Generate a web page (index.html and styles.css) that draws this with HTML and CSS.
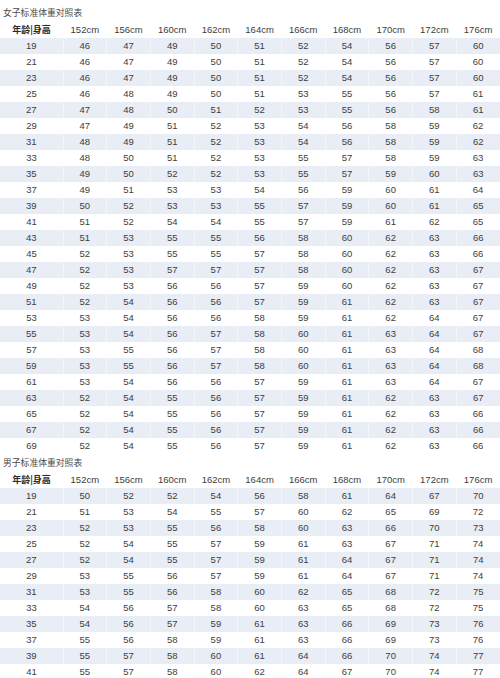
FILE: index.html
```html
<!DOCTYPE html>
<html lang="zh">
<head>
<meta charset="utf-8">
<title>标准体重对照表</title>
<link rel="stylesheet" href="styles.css">
</head>
<body>
<div class="section">
<div class="title">女子标准体重对照表</div>
<table class="chart">
<colgroup><col class="c-age"><col><col><col><col><col><col><col><col><col><col></colgroup>
<thead><tr><th class="age-h">年龄|身高</th><th>152cm</th><th>156cm</th><th>160cm</th><th>162cm</th><th>164cm</th><th>166cm</th><th>168cm</th><th>170cm</th><th>172cm</th><th>176cm</th></tr></thead>
<tbody>
<tr><td>19</td><td>46</td><td>47</td><td>49</td><td>50</td><td>51</td><td>52</td><td>54</td><td>56</td><td>57</td><td>60</td></tr>
<tr><td>21</td><td>46</td><td>47</td><td>49</td><td>50</td><td>51</td><td>52</td><td>54</td><td>56</td><td>57</td><td>60</td></tr>
<tr><td>23</td><td>46</td><td>47</td><td>49</td><td>50</td><td>51</td><td>52</td><td>54</td><td>56</td><td>57</td><td>60</td></tr>
<tr><td>25</td><td>46</td><td>48</td><td>49</td><td>50</td><td>51</td><td>53</td><td>55</td><td>56</td><td>57</td><td>61</td></tr>
<tr><td>27</td><td>47</td><td>48</td><td>50</td><td>51</td><td>52</td><td>53</td><td>55</td><td>56</td><td>58</td><td>61</td></tr>
<tr><td>29</td><td>47</td><td>49</td><td>51</td><td>52</td><td>53</td><td>54</td><td>56</td><td>58</td><td>59</td><td>62</td></tr>
<tr><td>31</td><td>48</td><td>49</td><td>51</td><td>52</td><td>53</td><td>54</td><td>56</td><td>58</td><td>59</td><td>62</td></tr>
<tr><td>33</td><td>48</td><td>50</td><td>51</td><td>52</td><td>53</td><td>55</td><td>57</td><td>58</td><td>59</td><td>63</td></tr>
<tr><td>35</td><td>49</td><td>50</td><td>52</td><td>52</td><td>53</td><td>55</td><td>57</td><td>59</td><td>60</td><td>63</td></tr>
<tr><td>37</td><td>49</td><td>51</td><td>53</td><td>53</td><td>54</td><td>56</td><td>59</td><td>60</td><td>61</td><td>64</td></tr>
<tr><td>39</td><td>50</td><td>52</td><td>53</td><td>53</td><td>55</td><td>57</td><td>59</td><td>60</td><td>61</td><td>65</td></tr>
<tr><td>41</td><td>51</td><td>52</td><td>54</td><td>54</td><td>55</td><td>57</td><td>59</td><td>61</td><td>62</td><td>65</td></tr>
<tr><td>43</td><td>51</td><td>53</td><td>55</td><td>55</td><td>56</td><td>58</td><td>60</td><td>62</td><td>63</td><td>66</td></tr>
<tr><td>45</td><td>52</td><td>53</td><td>55</td><td>55</td><td>57</td><td>58</td><td>60</td><td>62</td><td>63</td><td>66</td></tr>
<tr><td>47</td><td>52</td><td>53</td><td>57</td><td>57</td><td>57</td><td>58</td><td>60</td><td>62</td><td>63</td><td>67</td></tr>
<tr><td>49</td><td>52</td><td>53</td><td>56</td><td>56</td><td>57</td><td>59</td><td>60</td><td>62</td><td>63</td><td>67</td></tr>
<tr><td>51</td><td>52</td><td>54</td><td>56</td><td>56</td><td>57</td><td>59</td><td>61</td><td>62</td><td>63</td><td>67</td></tr>
<tr><td>53</td><td>53</td><td>54</td><td>56</td><td>56</td><td>58</td><td>59</td><td>61</td><td>62</td><td>64</td><td>67</td></tr>
<tr><td>55</td><td>53</td><td>54</td><td>56</td><td>57</td><td>58</td><td>60</td><td>61</td><td>63</td><td>64</td><td>67</td></tr>
<tr><td>57</td><td>53</td><td>55</td><td>56</td><td>57</td><td>58</td><td>60</td><td>61</td><td>63</td><td>64</td><td>68</td></tr>
<tr><td>59</td><td>53</td><td>55</td><td>56</td><td>57</td><td>58</td><td>60</td><td>61</td><td>63</td><td>64</td><td>68</td></tr>
<tr><td>61</td><td>53</td><td>54</td><td>56</td><td>56</td><td>57</td><td>59</td><td>61</td><td>63</td><td>64</td><td>67</td></tr>
<tr><td>63</td><td>52</td><td>54</td><td>55</td><td>56</td><td>57</td><td>59</td><td>61</td><td>62</td><td>63</td><td>67</td></tr>
<tr><td>65</td><td>52</td><td>54</td><td>55</td><td>56</td><td>57</td><td>59</td><td>61</td><td>62</td><td>63</td><td>66</td></tr>
<tr><td>67</td><td>52</td><td>54</td><td>55</td><td>56</td><td>57</td><td>59</td><td>61</td><td>62</td><td>63</td><td>66</td></tr>
<tr><td>69</td><td>52</td><td>54</td><td>55</td><td>56</td><td>57</td><td>59</td><td>61</td><td>62</td><td>63</td><td>66</td></tr>
</tbody>
</table>
</div>
<div class="section">
<div class="title">男子标准体重对照表</div>
<table class="chart">
<colgroup><col class="c-age"><col><col><col><col><col><col><col><col><col><col></colgroup>
<thead><tr><th class="age-h">年龄|身高</th><th>152cm</th><th>156cm</th><th>160cm</th><th>162cm</th><th>164cm</th><th>166cm</th><th>168cm</th><th>170cm</th><th>172cm</th><th>176cm</th></tr></thead>
<tbody>
<tr><td>19</td><td>50</td><td>52</td><td>52</td><td>54</td><td>56</td><td>58</td><td>61</td><td>64</td><td>67</td><td>70</td></tr>
<tr><td>21</td><td>51</td><td>53</td><td>54</td><td>55</td><td>57</td><td>60</td><td>62</td><td>65</td><td>69</td><td>72</td></tr>
<tr><td>23</td><td>52</td><td>53</td><td>55</td><td>56</td><td>58</td><td>60</td><td>63</td><td>66</td><td>70</td><td>73</td></tr>
<tr><td>25</td><td>52</td><td>54</td><td>55</td><td>57</td><td>59</td><td>61</td><td>63</td><td>67</td><td>71</td><td>74</td></tr>
<tr><td>27</td><td>52</td><td>54</td><td>55</td><td>57</td><td>59</td><td>61</td><td>64</td><td>67</td><td>71</td><td>74</td></tr>
<tr><td>29</td><td>53</td><td>55</td><td>56</td><td>57</td><td>59</td><td>61</td><td>64</td><td>67</td><td>71</td><td>74</td></tr>
<tr><td>31</td><td>53</td><td>55</td><td>56</td><td>58</td><td>60</td><td>62</td><td>65</td><td>68</td><td>72</td><td>75</td></tr>
<tr><td>33</td><td>54</td><td>56</td><td>57</td><td>58</td><td>60</td><td>63</td><td>65</td><td>68</td><td>72</td><td>75</td></tr>
<tr><td>35</td><td>54</td><td>56</td><td>57</td><td>59</td><td>61</td><td>63</td><td>66</td><td>69</td><td>73</td><td>76</td></tr>
<tr><td>37</td><td>55</td><td>56</td><td>58</td><td>59</td><td>61</td><td>63</td><td>66</td><td>69</td><td>73</td><td>76</td></tr>
<tr><td>39</td><td>55</td><td>57</td><td>58</td><td>60</td><td>61</td><td>64</td><td>66</td><td>70</td><td>74</td><td>77</td></tr>
<tr><td>41</td><td>55</td><td>57</td><td>58</td><td>60</td><td>62</td><td>64</td><td>67</td><td>70</td><td>74</td><td>77</td></tr>
</tbody>
</table>
</div>
</body>
</html>
```

FILE: styles.css
```css
html, body {
  margin: 0;
  padding: 0;
  background: #ffffff;
}
body {
  width: 500px;
  padding-top: 4px;
  font-family: "Liberation Sans", Arial, "Noto Sans CJK SC", sans-serif;
  color: #3a3a3a;
  overflow: hidden;
}
.title {
  height: 18px;
  line-height: 18px;
  padding-left: 3px;
  font-family: "Noto Sans CJK SC", sans-serif;
  font-size: 8.8px;
  color: #4a4a4a;
}
.chart {
  width: 500px;
  table-layout: fixed;
  border-collapse: collapse;
}
.chart col.c-age {
  width: 63px;
}
.chart th,
.chart td {
  padding: 0;
  text-align: center;
  font-size: 9.5px;
  font-weight: normal;
  white-space: nowrap;
}
.chart th {
  height: 16px;
  line-height: 16px;
  color: #3c3c3c;
}
.chart th.age-h {
  font-family: "Noto Sans CJK SC", sans-serif;
  font-weight: bold;
  font-size: 9px;
  color: #2a2a2a;
}
.chart td {
  height: 16px;
  line-height: 16px;
  color: #3e3e3e;
}
.chart tbody tr:nth-child(odd) td {
  background: #e8edf6;
  border-right: 1px solid #f2f5fa;
}
.chart tbody tr:nth-child(odd) td:last-child {
  border-right: none;
}
```
